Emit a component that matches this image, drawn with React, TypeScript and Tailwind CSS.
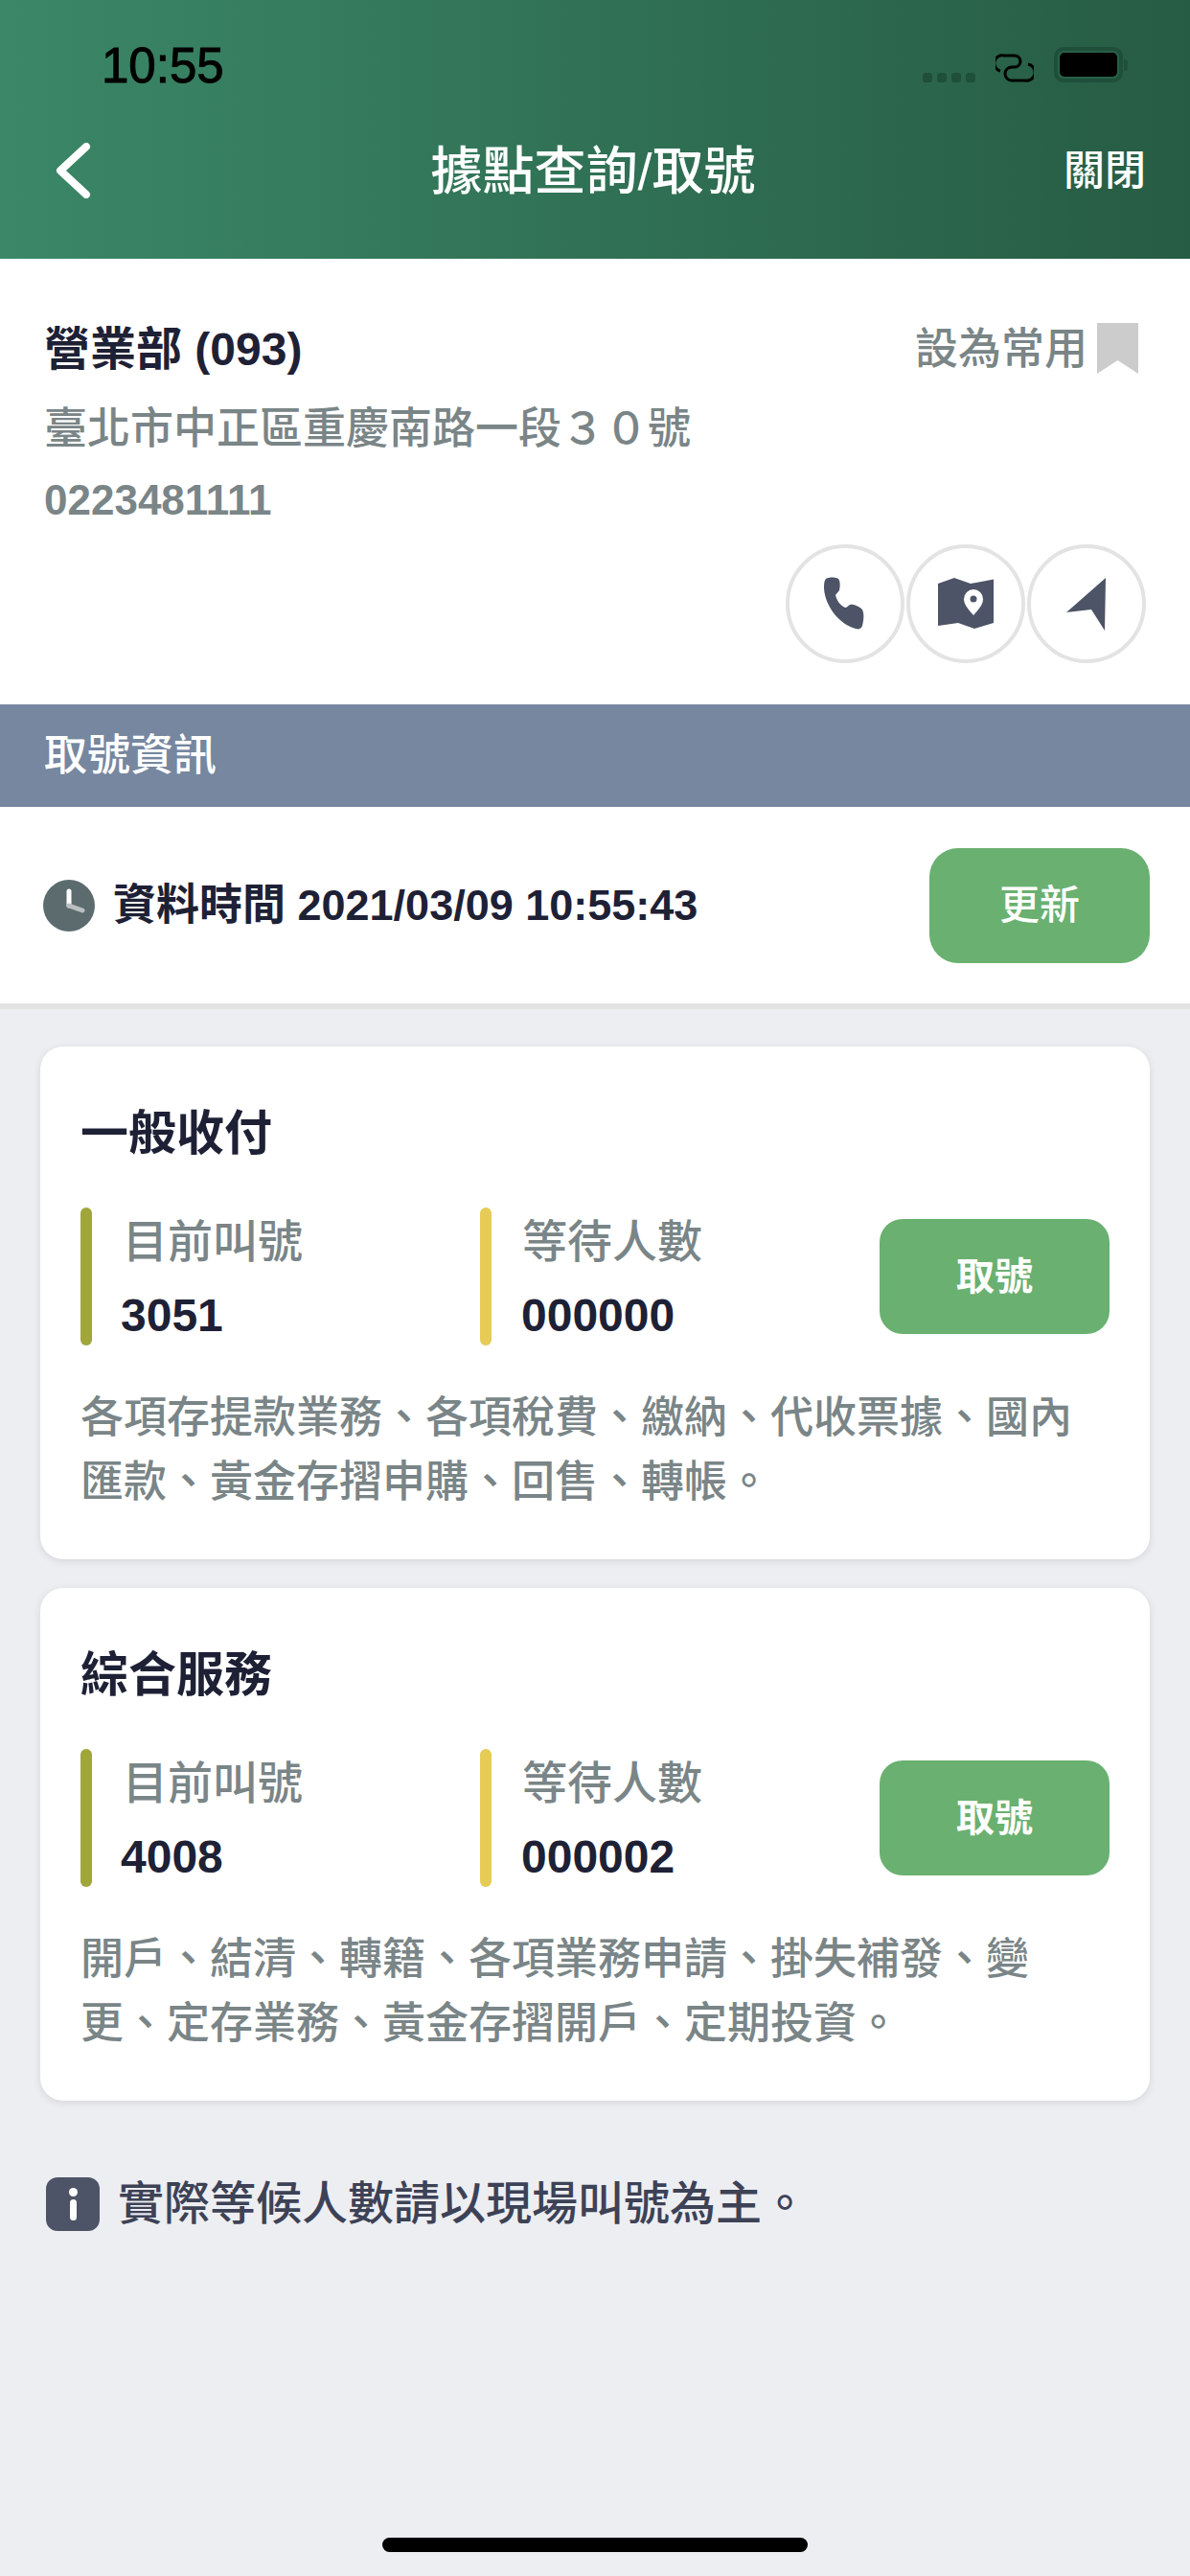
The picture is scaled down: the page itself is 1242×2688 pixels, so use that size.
const font = "font-['Liberation_Sans','Noto_Sans_CJK_TC',sans-serif]";

function RoundIcon({ children }: { children: React.ReactNode }) {
  return (
    <button className="w-[124px] h-[124px] rounded-full border-[4px] border-[#e3e3e3] flex items-center justify-center bg-white">
      {children}
    </button>
  );
}

function ServiceCard({
  title,
  current,
  waiting,
  lines,
}: {
  title: string;
  current: string;
  waiting: string;
  lines: string[];
}) {
  return (
    <div className="bg-white rounded-[24px] shadow-[0_2px_8px_rgba(0,0,0,0.1)] h-[535px] pl-[42px] pr-[42px] pt-[61px]">
      <h3 className="text-[50px] leading-[60px] font-bold text-[#1e2135]">{title}</h3>
      <div className="flex items-center mt-[47px]">
        <div className="flex w-[417px] h-[144px]">
          <div className="w-[12px] h-full rounded-[6px] bg-[#a0a63a]" />
          <div className="ml-[32px] mt-[4px]">
            <div className="text-[47px] leading-[64px] font-medium text-[#7a8587]">目前叫號</div>
            <div className="text-[48px] leading-[56px] mt-[17px] -ml-[2px] font-bold text-[#1e2135]">{current}</div>
          </div>
        </div>
        <div className="flex w-[417px] h-[144px]">
          <div className="w-[12px] h-full rounded-[6px] bg-[#e6cb57]" />
          <div className="ml-[32px] mt-[4px]">
            <div className="text-[47px] leading-[64px] font-medium text-[#7a8587]">等待人數</div>
            <div className="text-[48px] leading-[56px] mt-[17px] -ml-[1px] font-bold text-[#1e2135]">{waiting}</div>
          </div>
        </div>
        <button className="w-[240px] h-[120px] rounded-[24px] bg-[#6ab071] text-white text-[40px] font-bold">取號</button>
      </div>
      <div className="mt-[42px]">
        {lines.map((l) => (
          <p key={l} className="text-[45px] leading-[67px] font-medium text-[#7a8587] whitespace-nowrap">{l}</p>
        ))}
      </div>
    </div>
  );
}

export default function App() {
  return (
    <div className={`${font} w-[1242px] h-[2688px] bg-[#edeef2] relative overflow-hidden`}>
      <header className="h-[270px] bg-gradient-to-r from-[#3b8768] to-[#265c43] text-white">
        <div className="h-[135px] flex items-center justify-between pl-[106px] pr-[65px]">
          <span className="text-[51px] font-normal text-black mt-[4px] [-webkit-text-stroke:1px_black]">10:55</span>
          <div className="flex items-center gap-[21px]">
            <svg width="55" height="10" viewBox="0 0 55 10" className="mt-[26px]" fill="#1f4f3a">
              <rect x="0" width="10" height="10" rx="3" />
              <rect x="15" width="10" height="10" rx="3" />
              <rect x="30" width="10" height="10" rx="3" />
              <rect x="45" width="10" height="10" rx="3" />
            </svg>
            <svg width="40" height="30" viewBox="0 0 40 30" fill="none" stroke="#000" strokeWidth="3" className="mt-[6px]">
              <path d="M5 18A8 8 0 0 1 9 2H20A6 6 0 0 1 20 14H17A7 7 0 0 0 17 28H31A8 8 0 0 0 34 11" />
            </svg>
            <div className="flex items-center gap-[1px]">
              <div className="w-[72px] h-[37px] rounded-[10px] border-[4px] border-[#1f4f3a] p-[2px]">
                <div className="w-full h-full rounded-[5px] bg-black" />
              </div>
              <div className="w-[4px] h-[12px] rounded-r-[4px] bg-[#1f4f3a]" />
            </div>
          </div>
        </div>
        <div className="h-[96px] flex items-center justify-between relative pl-[46px] pr-[46px] -mt-[5px]">
          <svg width="38" height="58" viewBox="0 0 38 58" fill="none" stroke="#fff" strokeWidth="8" strokeLinecap="round" strokeLinejoin="round" className="ml-[11px]">
            <path d="M33 4L6 29l27 25" />
          </svg>
          <h1 className="absolute left-0 right-[4px] mt-[3px] text-center text-[54px] font-medium">據點查詢/取號</h1>
          <span className="text-[43px] font-medium">關閉</span>
        </div>
      </header>

      <section className="bg-white h-[465px] pl-[46px] pr-[46px] pt-[65px] relative">
        <div className="flex justify-between items-start">
          <div>
            <div className="text-[48px] leading-[60px] font-bold text-[#1e2135]">營業部 (093)</div>
            <div className="text-[45px] leading-[60px] font-medium text-[#7a8587] mt-[23px]">臺北市中正區重慶南路一段３０號</div>
            <div className="text-[44px] leading-[60px] font-bold text-[#7a8587] mt-[14px]">0223481111</div>
          </div>
          <div className="flex items-start gap-[10px] mr-[8px]">
            <span className="text-[45px] leading-[60px] font-medium text-[#7a8587]">設為常用</span>
            <svg width="43" height="53" viewBox="0 0 43 53" fill="#cccccc" className="mt-[2px]">
              <path d="M0 0h43v53L21.500 39 0 53z" />
            </svg>
          </div>
        </div>
        <div className="flex justify-end gap-[2px] mt-[16px]">
          <RoundIcon>
            <svg width="44" height="56" viewBox="0 0 44 56" fill="#4d5467">
              <path d="M2 2c3-2 10-2 13 0 2 2 2 8 1 12-1 2-3 3-4 5 1 5 5 11 10 13 2 0 3-2 5-3 3-1 8 1 12 4 3 3 3 10 1 18-1 3-4 4-7 3C17 50 1 31 0 12c0-4 0-8 2-10z" />
            </svg>
          </RoundIcon>
          <RoundIcon>
            <svg width="58" height="54" viewBox="0 0 58 54" fill="#4d5467">
              <path d="M0 6L17 0l17 6 24-4.500V47l-20 6-17-6L0 50z" />
              <path d="M37 39c-7-8-10-12-10-17a10 10 0 0 1 20 0c0 5-3 9-10 17z" fill="#fff" />
              <circle cx="37" cy="22" r="3.500" fill="#4d5467" />
            </svg>
          </RoundIcon>
          <RoundIcon>
            <svg width="42" height="55" viewBox="0 0 42 55" fill="#4d5467">
              <path d="M41 0L0 36l26-3 14 22z" />
            </svg>
          </RoundIcon>
        </div>
      </section>

      <div className="h-[107px] bg-[#76879f] flex items-center pl-[46px] text-white text-[45px] font-medium">取號資訊</div>

      <div className="h-[211px] bg-white border-b-[6px] border-[#e3e3e3] flex items-center justify-between pl-[45px] pr-[42px]">
        <div className="flex items-center gap-[19px]">
          <svg width="54" height="54" viewBox="0 0 54 54">
            <circle cx="27" cy="27" r="27" fill="#5c6b6e" />
            <path d="M27 12v15" stroke="#fff" strokeWidth="5" strokeLinecap="round" />
            <path d="M27 27l14 5" stroke="#b9bfbf" strokeWidth="5" strokeLinecap="round" />
          </svg>
          <span className="text-[45px] font-bold text-[#1e2135]">資料時間 2021/03/09 10:55:43</span>
        </div>
        <button className="w-[230px] h-[120px] rounded-[30px] bg-[#6ab071] text-white text-[42px] font-medium">更新</button>
      </div>

      <div className="px-[42px] pt-[39px] flex flex-col gap-[30px]">
        <ServiceCard
          title="一般收付"
          current="3051"
          waiting="000000"
          lines={["各項存提款業務、各項稅費、繳納、代收票據、國內", "匯款、黃金存摺申購、回售、轉帳。"]}
        />
        <ServiceCard
          title="綜合服務"
          current="4008"
          waiting="000002"
          lines={["開戶、結清、轉籍、各項業務申請、掛失補發、變", "更、定存業務、黃金存摺開戶、定期投資。"]}
        />
      </div>

      <div className="flex items-center gap-[19px] pl-[48px] mt-[72px]">
        <div className="w-[56px] h-[56px] rounded-[12px] bg-[#4d5467] flex flex-col items-center justify-center gap-[3px]">
          <div className="w-[9px] h-[9px] rounded-full bg-white" />
          <div className="w-[7px] h-[22px] rounded-full bg-white" />
        </div>
        <span className="text-[48px] font-medium text-[#3d4256]">實際等候人數請以現場叫號為主。</span>
      </div>

      <div className="absolute left-[399px] top-[2648px] w-[444px] h-[15px] rounded-full bg-black" />
    </div>
  );
}
